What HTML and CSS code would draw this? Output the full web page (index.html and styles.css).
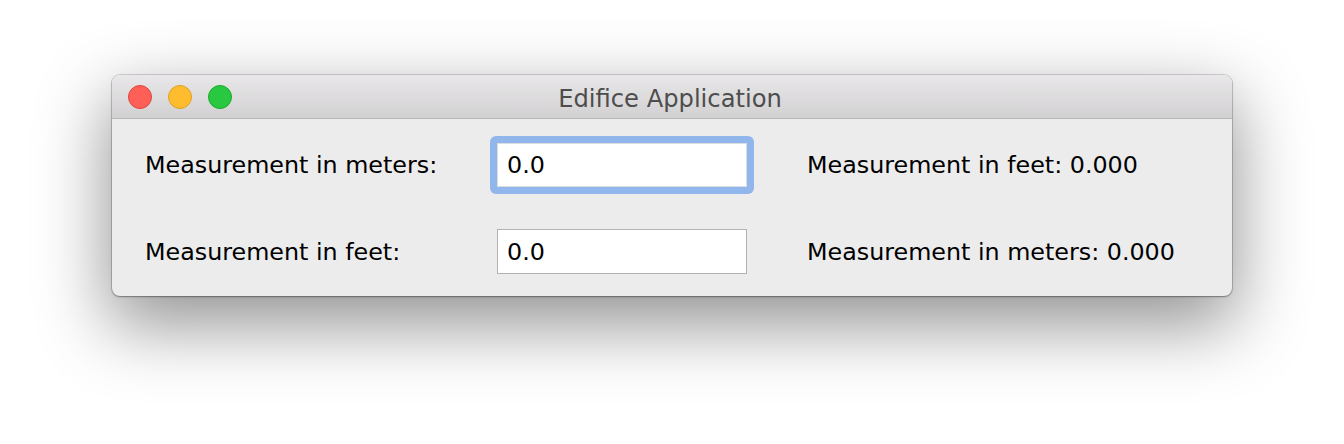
FILE: index.html
```html
<!DOCTYPE html>
<html>
<head>
<meta charset="utf-8">
<link rel="stylesheet" href="styles.css">
</head>
<body>
<div class="window">
  <div class="titlebar">
    <div class="lights">
      <span class="light red"></span>
      <span class="light yellow"></span>
      <span class="light green"></span>
    </div>
    <div class="title">Edifice Application</div>
  </div>
  <div class="content">
    <div class="label">Measurement in meters:</div>
    <div class="field focused"><div class="input">0.0</div></div>
    <div class="result">Measurement in feet: 0.000</div>
    <div class="label">Measurement in feet:</div>
    <div class="field"><div class="input">0.0</div></div>
    <div class="result">Measurement in meters: 0.000</div>
  </div>
</div>
</body>
</html>
```
FILE: styles.css
```css
html, body {
  margin: 0;
  padding: 0;
  background: #ffffff;
  width: 1344px;
  height: 444px;
  overflow: hidden;
}
body {
  font-family: "DejaVu Sans", "Liberation Sans", sans-serif;
}
.window {
  margin: 75px 0 0 112px;
  width: 1120px;
  height: 221px;
  box-sizing: border-box;
  border-radius: 8px;
  background: #ececec;
  box-shadow: 0 0 0 1px rgba(0,0,0,0.14), 0 26px 70px 4px rgba(0,0,0,0.42), 0 1px 2px rgba(0,0,0,0.3);
  overflow: hidden;
  display: flex;
  flex-direction: column;
}
.titlebar {
  height: 44px;
  box-sizing: border-box;
  border-bottom: 1px solid #b8b8b8;
  background: linear-gradient(#e9e7e9, #d2d1d2);
  display: flex;
  align-items: center;
  position: relative;
}
.lights {
  display: flex;
  gap: 16px;
  padding-left: 16px;
}
.light {
  width: 22px;
  height: 22px;
  border-radius: 50%;
  border: 1px solid;
}
.red { background: #fe5f57; border-color: #e0443e; }
.yellow { background: #febc2e; border-color: #dea123; }
.green { background: #28c840; border-color: #1aab29; }
.title {
  position: absolute;
  left: 0;
  right: 0;
  top: 0;
  bottom: 0;
  display: flex;
  align-items: center;
  justify-content: center;
  font-size: 24.2px;
  color: #4d4d4d;
  padding-top: 4px;
  padding-right: 4px;
}
.content {
  padding: 23px 0 0 33px;
  display: grid;
  grid-template-columns: 352px 310px 1fr;
  grid-auto-rows: 45px;
  row-gap: 42px;
  align-items: center;
  font-size: 23.8px;
  color: #000;
}
.label, .result {
  line-height: 28px;
}
.field {
  width: 250px;
  height: 45px;
}
.field.focused {
  padding: 7px;
  margin: -7px;
  background: #91b6ec;
  border-radius: 6px;
  height: 44px;
}
.input {
  box-sizing: border-box;
  width: 250px;
  height: 100%;
  background: #ffffff;
  border: 1px solid #b2b2b2;
  padding: 0 9px;
  display: flex;
  align-items: center;
}
.focused .input {
  border-color: #dcdde2;
}
```
